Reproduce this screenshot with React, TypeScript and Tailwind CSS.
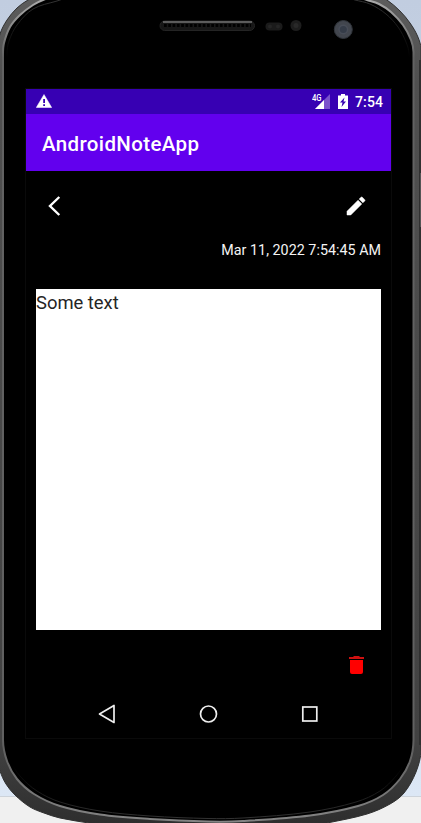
type Point = [number, number];

// Joins the points into one closed, smooth curve; handles scale with each segment.
function smoothPath(points: Point[]): string {
  const n = points.length;
  let d = `M${points[0][0]} ${points[0][1]}`;
  for (let i = 0; i < n; i++) {
    const a = points[(i + n - 1) % n];
    const b = points[i];
    const c = points[(i + 1) % n];
    const e = points[(i + 2) % n];
    const length = Math.hypot(c[0] - b[0], c[1] - b[1]);
    if (length > 150) {
      d += ` L${c[0]} ${c[1]}`;
      continue;
    }
    const s = length / 3 / Math.hypot(c[0] - a[0], c[1] - a[1]);
    const t = length / 3 / Math.hypot(e[0] - b[0], e[1] - b[1]);
    d += ` C${b[0] + (c[0] - a[0]) * s} ${b[1] + (c[1] - a[1]) * s} ${c[0] - (e[0] - b[0]) * t} ${c[1] - (e[1] - b[1]) * t} ${c[0]} ${c[1]}`;
  }
  return d + "Z";
}

const OUTER = smoothPath([
  [28, 0], [17, 8], [7, 20], [0, 34], [-3, 52],
  [-3, 758], [0, 771], [6, 784], [15, 795], [30, 807], [44, 813], [60, 818], [92, 823.5], [110, 826],
  [308, 826], [327, 823], [367, 814], [390, 804], [404, 793], [416, 772], [421, 750],
  [421, 49], [417.5, 36], [410, 23], [400, 11], [387, 0], [372, -8], [45, -8],
]);
const RIM = smoothPath([
  [43, 0], [33, 5], [20, 15], [10, 27], [4, 43], [3, 54],
  [3, 740], [7, 761], [17, 779], [34, 794], [60, 806], [100, 814.500], [150, 819], [208, 821.500],
  [243, 821], [310, 815.500], [358, 806], [383, 795], [400, 779], [410, 761], [413.500, 740],
  [413.500, 52], [411, 40], [403, 25], [391, 12], [379, 4], [367, 0], [350, -5], [60, -5],
]);
const GLOSS = smoothPath([
  [57, 1], [33, 9], [17, 25], [9, 41], [7, 54],
  [7, 740], [11, 761], [20, 776], [37, 791], [60, 802], [100, 811], [150, 816], [208, 818.500],
  [243, 818], [310, 812], [356, 802], [380, 791], [396, 776], [406, 760], [409, 740],
  [409, 54], [406, 42], [398, 27], [386, 14], [370, 4], [355, 0], [340, -4], [75, -4],
]);

function DeviceFrame() {
  return (
    <svg className="absolute inset-0" width="421" height="823" viewBox="0 0 421 823">
      <defs>
        <linearGradient id="edge" x1="0" y1="0" x2="0" y2="823" gradientUnits="userSpaceOnUse">
          <stop offset="0" stopColor="#5c5c5c" />
          <stop offset="0.1" stopColor="#505050" />
          <stop offset="0.9" stopColor="#424242" />
          <stop offset="1" stopColor="#2e2e2e" />
        </linearGradient>
        <linearGradient id="rim" x1="0" y1="0" x2="0" y2="823" gradientUnits="userSpaceOnUse">
          <stop offset="0" stopColor="#aaa" />
          <stop offset="0.07" stopColor="#626262" />
          <stop offset="0.91" stopColor="#606060" />
          <stop offset="1" stopColor="#858585" />
        </linearGradient>
        <linearGradient id="gloss" x1="0" y1="0" x2="0" y2="823" gradientUnits="userSpaceOnUse">
          <stop offset="0" stopColor="#333" />
          <stop offset="0.07" stopColor="#000" />
          <stop offset="0.93" stopColor="#000" />
          <stop offset="1" stopColor="#363636" />
        </linearGradient>
      </defs>
      <path d={OUTER} fill="url(#edge)" stroke="#303030" strokeWidth="1" />
      <path d="M420 60V745" stroke="#303030" strokeWidth="2" />
      <path d="M420.500 173v54" stroke="#555" strokeWidth="1" />
      <path d={RIM} fill="#000" stroke="url(#rim)" strokeWidth="2" />
      <path d={GLOSS} fill="none" stroke="url(#gloss)" strokeWidth="1" />
      <rect x="160" y="21" width="94.500" height="9.500" rx="4.700" fill="#171717" stroke="#242424" />
      <path d="M163 22h89" stroke="#737373" strokeWidth="1.300" />
      <path d="M164 25.500h87" stroke="#000" strokeWidth="3" strokeDasharray="2.700 1.600" />
      <rect x="265.500" y="22.500" width="17" height="8" rx="4" fill="#1b1b1b" />
      <circle cx="270" cy="26.500" r="2" fill="#252525" />
      <circle cx="278" cy="26.500" r="2" fill="#252525" />
      <circle cx="296" cy="25.500" r="5.500" fill="#1d1d1d" />
      <circle cx="296" cy="25.500" r="2.500" fill="#292929" />
      <circle cx="343.300" cy="29.500" r="9" fill="#42464e" stroke="#30343a" />
      <circle cx="343.300" cy="29.500" r="5" fill="#484d58" />
      <circle cx="343.300" cy="29.500" r="3.500" fill="#353c48" />
      <rect x="25.500" y="88.500" width="366" height="650" fill="none" stroke="#0a0a0a" />
    </svg>
  );
}

function StatusBar() {
  return (
    <div className="flex h-[25px] items-center bg-[#3700b3] pl-[10px] pr-[8px] text-white">
      <svg width="16" height="14" viewBox="0 0 16 14" className="mb-px">
        <path d="M8 0.500L15.700 13.500H0.300Z" fill="white" stroke="white" strokeWidth="0.500" />
        <path d="M7.200 5h1.800v4H7.200zm0 5.200h1.800V12H7.200z" fill="#3700b3" />
      </svg>
      <div className="relative ml-auto h-[15px] w-[19px]">
        <svg width="19" height="15" viewBox="0 0 19 15">
          <path d="M19 0V15H4Z" fill="#7b52cc" />
          <path d="M13 6V15H4Z" fill="white" />
        </svg>
        <span className="absolute left-px top-0 origin-left scale-x-85 text-[9px] font-medium leading-[8px] tracking-[-0.200px]">4G</span>
      </div>
      <svg width="10" height="15" viewBox="0 0 10 15" className="ml-[8px]">
        <path d="M3 0h4v1.500h3V15H0V1.500h3Z" fill="white" />
        <path d="M6.500 3.500L2 8.500h2.500L3.500 13L8 7.500H5.500Z" fill="#3700b3" />
      </svg>
      <span className="ml-[7px] mt-px text-[14px] font-medium leading-5 tracking-[0.100px]">7:54</span>
    </div>
  );
}

function NoteScreen() {
  return (
    <main className="flex h-[516px] flex-col px-[10px]">
      <div className="flex h-[69px] items-center justify-between pl-[10px] pr-[13px]">
        <button className="flex size-6 items-center" aria-label="Back">
          <svg width="24" height="24" viewBox="0 0 24 24">
            <path d="M13.300 3L4 12L13.300 21" fill="none" stroke="white" strokeWidth="2.400" />
          </svg>
        </button>
        <button aria-label="Edit">
          <svg width="24" height="24" viewBox="0 0 24 24" fill="white">
            <path d="M3 17.250V21h3.750L17.810 9.940l-3.750-3.750L3 17.250zM20.710 7.040a1 1 0 0 0 0-1.410l-2.340-2.340a1 1 0 0 0-1.410 0l-1.830 1.830 3.750 3.750 1.830-1.830z" stroke="white" strokeWidth="0.500" />
          </svg>
        </button>
      </div>
      <time className="h-[49px] text-right text-[14.300px] leading-5 tracking-[0.020px] text-[#f4f4f4]">Mar 11, 2022 7:54:45 AM</time>
      <div className="h-[341px] bg-white pt-[3px] text-[18.400px] leading-[22px] text-[#252525]">Some text</div>
      <div className="flex justify-end pr-[13px] pt-[23px]">
        <button aria-label="Delete">
          <svg width="24" height="24" viewBox="0 0 24 24" fill="#ff0000">
            <path d="M6 7h13v12a2 2 0 0 1-2 2H8a2 2 0 0 1-2-2z" />
            <path d="M5 4h4l1-1h5l1 1h4v2H5z" fill="#cf1010" />
          </svg>
        </button>
      </div>
    </main>
  );
}

function NavigationBar() {
  return (
    <nav className="flex h-[53px] items-center justify-between px-[70px]">
      <svg width="22" height="22" viewBox="0 0 22 22"><path d="M18 2.500V19.500L3.500 11Z" fill="none" stroke="#eee" strokeWidth="1.700" strokeLinejoin="round" /></svg>
      <svg width="22" height="22" viewBox="0 0 22 22"><circle cx="10.500" cy="11" r="8" fill="none" stroke="#eee" strokeWidth="1.700" /></svg>
      <svg width="22" height="22" viewBox="0 0 22 22"><rect x="3.800" y="4" width="14" height="14" fill="none" stroke="#eee" strokeWidth="1.700" /></svg>
    </nav>
  );
}

export default function App() {
  return (
    <div className="relative h-[823px] w-[421px] overflow-hidden bg-[#f0f0f0] font-['Roboto',sans-serif]">
      <div className="h-[797px] border-b border-[#cdd3da] bg-linear-to-b from-[#c1cde0] to-[#dce7f5]" />
      <DeviceFrame />
      <div className="absolute left-[26px] top-[89px] w-[365px]">
        <StatusBar />
        <header className="flex h-[57px] items-center bg-[#6200ee] pl-4 pt-[2px] text-[20.500px] font-medium leading-[30px] tracking-[0.370px] text-white">AndroidNoteApp</header>
        <NoteScreen />
        <NavigationBar />
      </div>
    </div>
  );
}
